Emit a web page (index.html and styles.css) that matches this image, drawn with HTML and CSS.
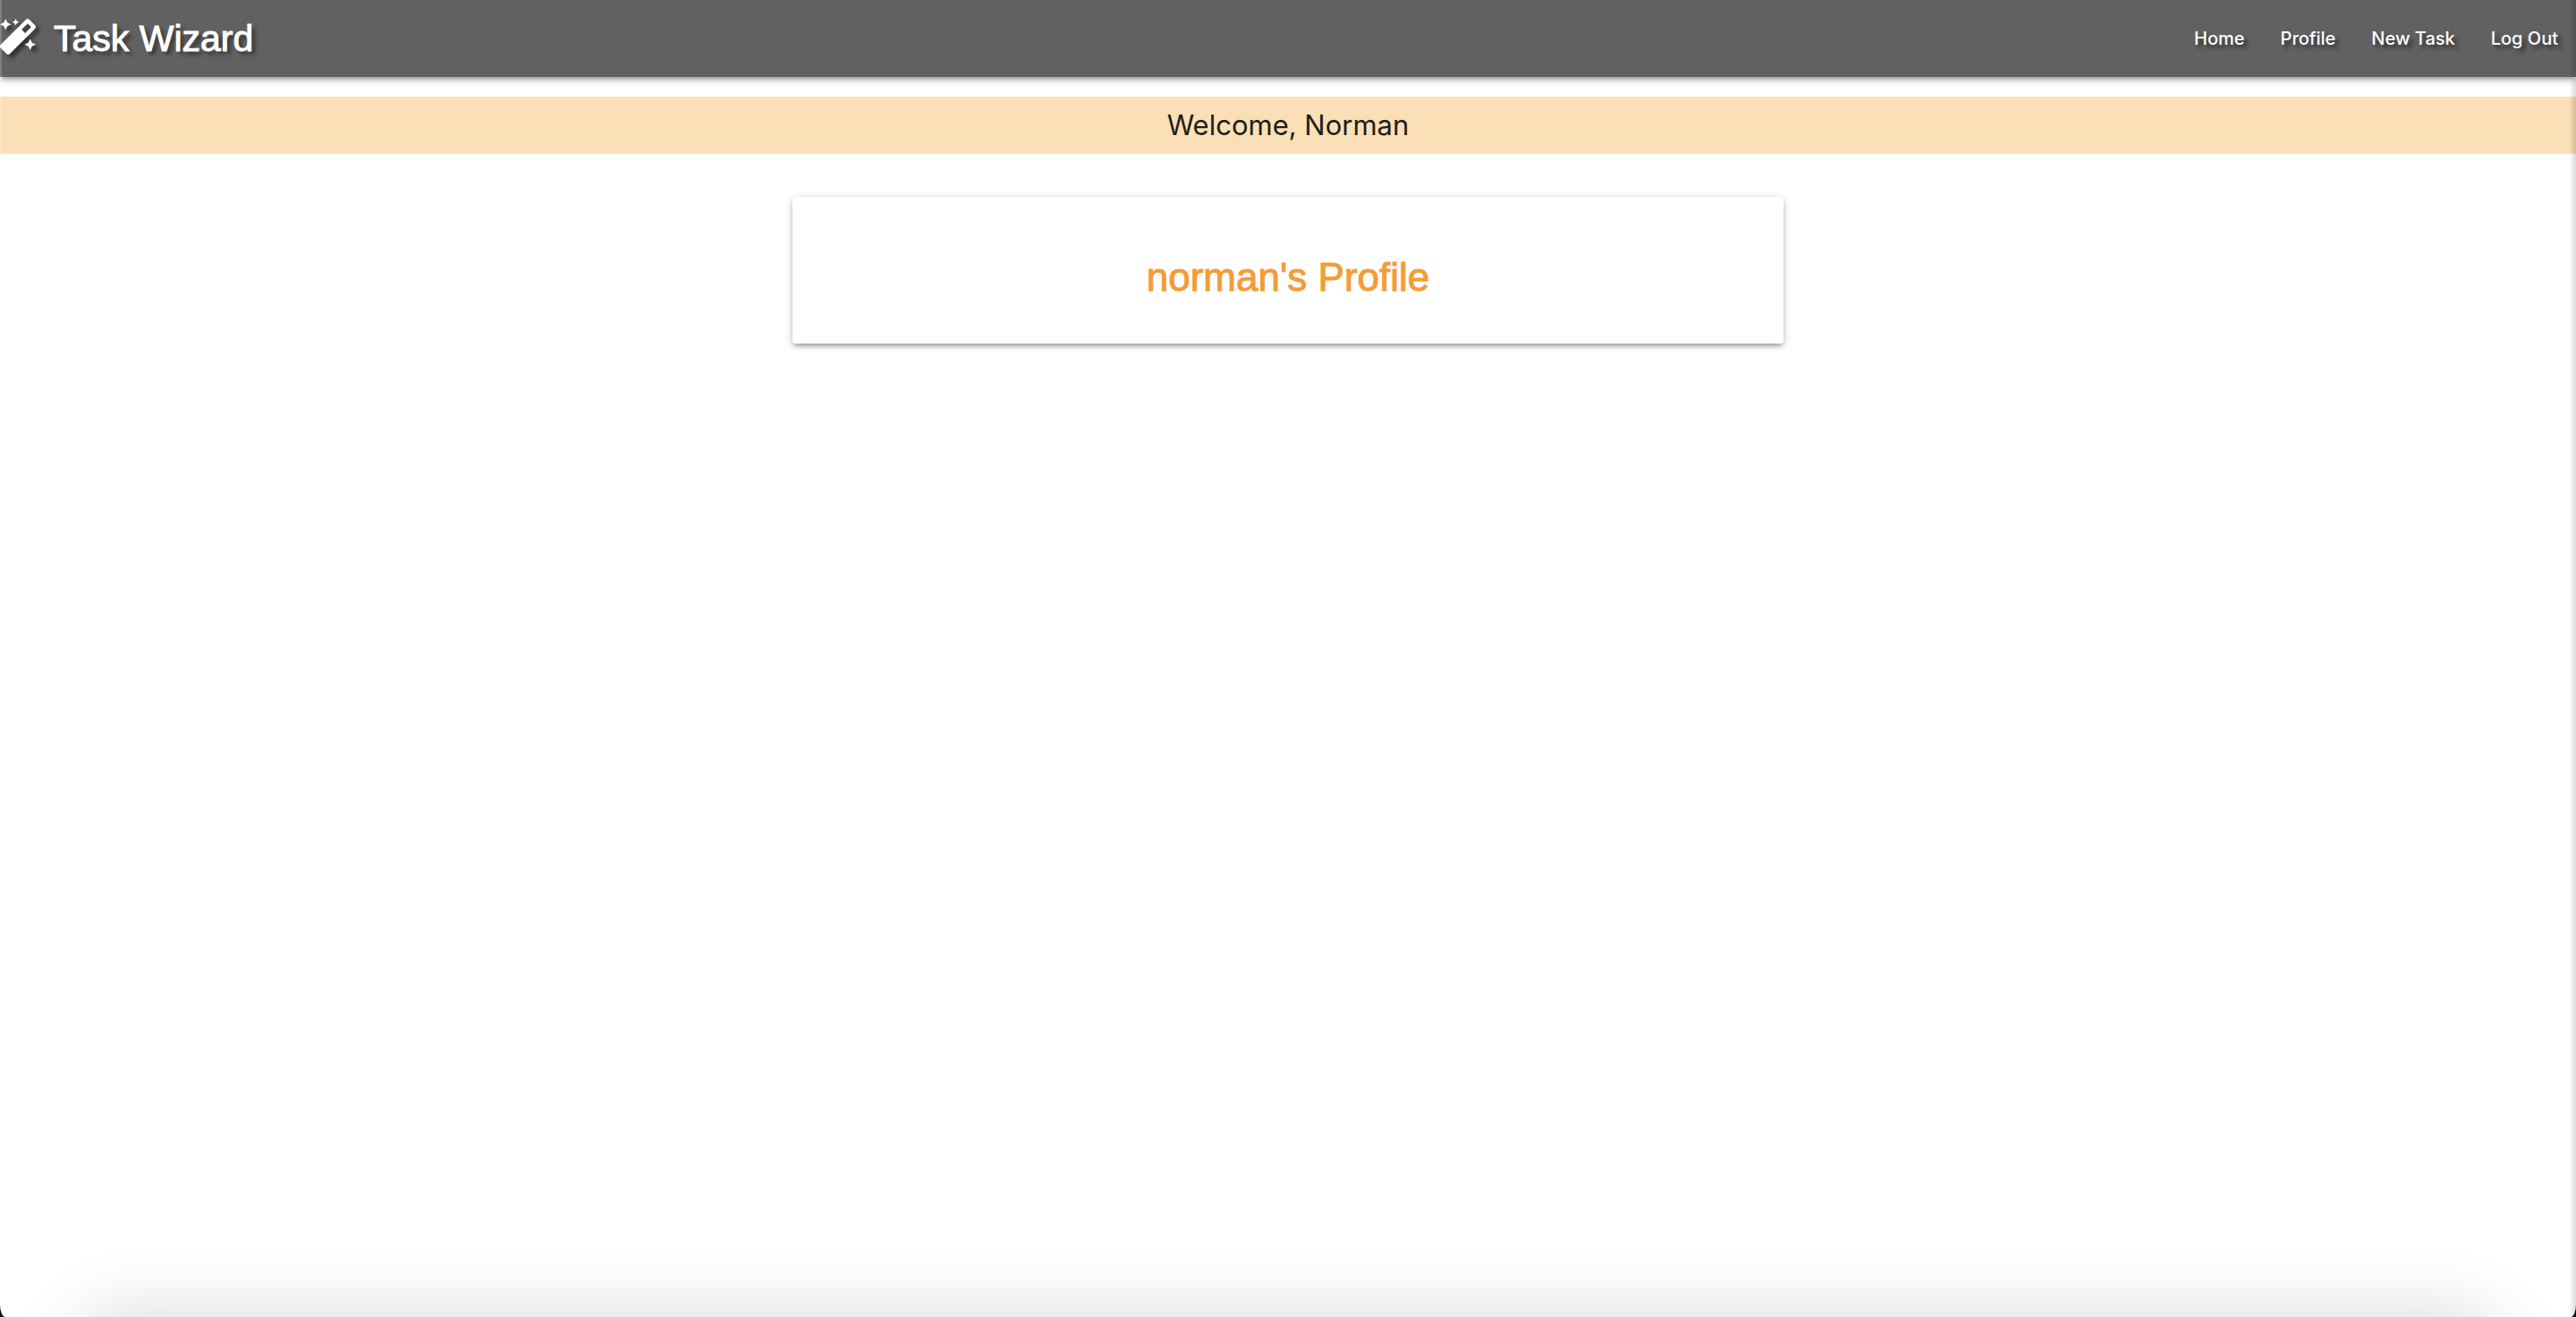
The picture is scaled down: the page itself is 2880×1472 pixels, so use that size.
FILE: index.html
```html
<!DOCTYPE html>
<html lang="en">
<head>
<meta charset="utf-8">
<title>Task Wizard</title>
<link rel="stylesheet" href="styles.css">
</head>
<body>
<nav class="nav">
  <a class="brand" href="#">
    <svg class="brand-icon" viewBox="0 0 512 512" aria-hidden="true"><path fill="currentColor" d="M224 96l16-32 32-16-32-16-16-32-16 32-32 16 32 16 16 32zM80 160l26.66-53.33L160 80l-53.34-26.67L80 0 53.34 53.33 0 80l53.34 26.67L80 160zm352 128l-26.66 53.33L352 368l53.34 26.67L432 448l26.66-53.33L512 368l-53.34-26.67L432 288zm70.62-193.77L417.77 9.38C411.53 3.12 403.34 0 395.15 0c-8.19 0-16.38 3.12-22.63 9.38L9.38 372.52c-12.5 12.5-12.5 32.76 0 45.25l84.85 84.85c6.25 6.25 14.44 9.37 22.62 9.37 8.19 0 16.38-3.12 22.63-9.37l363.14-363.15c12.5-12.48 12.5-32.75 0-45.24zM359.45 203.46l-50.91-50.91 86.6-86.6 50.91 50.91-86.6 86.6z"/></svg>
    <span>Task Wizard</span>
  </a>
  <ul class="links">
    <li><a href="#">Home</a></li>
    <li><a href="#">Profile</a></li>
    <li><a href="#">New Task</a></li>
    <li><a href="#">Log Out</a></li>
  </ul>
</nav>
<main>
  <p class="flash">Welcome, Norman</p>
  <section class="card">
    <h1>norman's Profile</h1>
  </section>
</main>
<div class="window-edge" aria-hidden="true"></div>
</body>
</html>
```
FILE: styles.css
```css
* {
  box-sizing: border-box;
}

body {
  margin: 0;
  min-height: 100vh;
  background: #fff;
  color: #1f1d18;
  font-family: Inter, "Liberation Sans", sans-serif;
}

.nav {
  display: flex;
  justify-content: space-between;
  align-items: center;
  height: 86px;
  background: #616161;
  color: #fff;
  box-shadow: 0 4px 4px rgba(0, 0, 0, 0.14), 0 6px 2px -4px rgba(0, 0, 0, 0.12), 0 2px 10px rgba(0, 0, 0, 0.2);
  text-shadow: 4px 4px 4px rgba(0, 0, 0, 0.5);
}

.nav a {
  color: inherit;
  text-decoration: none;
}

.nav .brand {
  display: flex;
  align-items: center;
  gap: 20px;
  font-family: "Liberation Sans", sans-serif;
  font-size: 41px;
  -webkit-text-stroke: 1px;
}

.brand-icon {
  width: 40px;
  height: 40px;
  margin-bottom: 4px;
  filter: drop-shadow(4px 4px 2px rgba(0, 0, 0, 0.5));
}

.links {
  display: flex;
  gap: 40px;
  margin: 0;
  padding: 0 20px 0 0;
  list-style: none;
  font-size: 20px;
  font-weight: 500;
}

.flash {
  margin: 22px 0 48px;
  background: #fbdfb7;
  font-size: 31px;
  line-height: 64px;
  text-align: center;
}

.card {
  width: 38.472%;
  margin: 0 auto;
  padding: 48px;
  border-radius: 4px;
  background: #fff;
  box-shadow: 0 4px 4px rgba(0, 0, 0, 0.14), 0 6px 2px -4px rgba(0, 0, 0, 0.12), 0 2px 10px rgba(0, 0, 0, 0.2);
}

.card h1 {
  margin: 16px 0 0;
  color: #f39c36;
  font-family: "Liberation Sans", sans-serif;
  font-size: 44px;
  font-weight: 400;
  line-height: 52px;
  text-align: center;
  -webkit-text-stroke: 1px;
}

.window-edge {
  position: fixed;
  inset: 0;
  overflow: hidden;
  border-radius: 0 0 6px 6px / 0 0 14px 14px;
  background:
    linear-gradient(to left, rgba(0, 0, 0, 0.14), transparent) right / 8px 100% no-repeat,
    linear-gradient(rgba(255, 255, 255, 0.2), rgba(255, 255, 255, 0.2)) left / 2px 100% no-repeat;
  box-shadow: 0 0 0 20px #100610;
  pointer-events: none;
}

.window-edge::after {
  content: "";
  position: absolute;
  top: 100%;
  left: 90px;
  right: 90px;
  height: 100px;
  border-radius: 40px;
  box-shadow: 0 0 80px rgba(0, 0, 0, 0.17);
}
```
